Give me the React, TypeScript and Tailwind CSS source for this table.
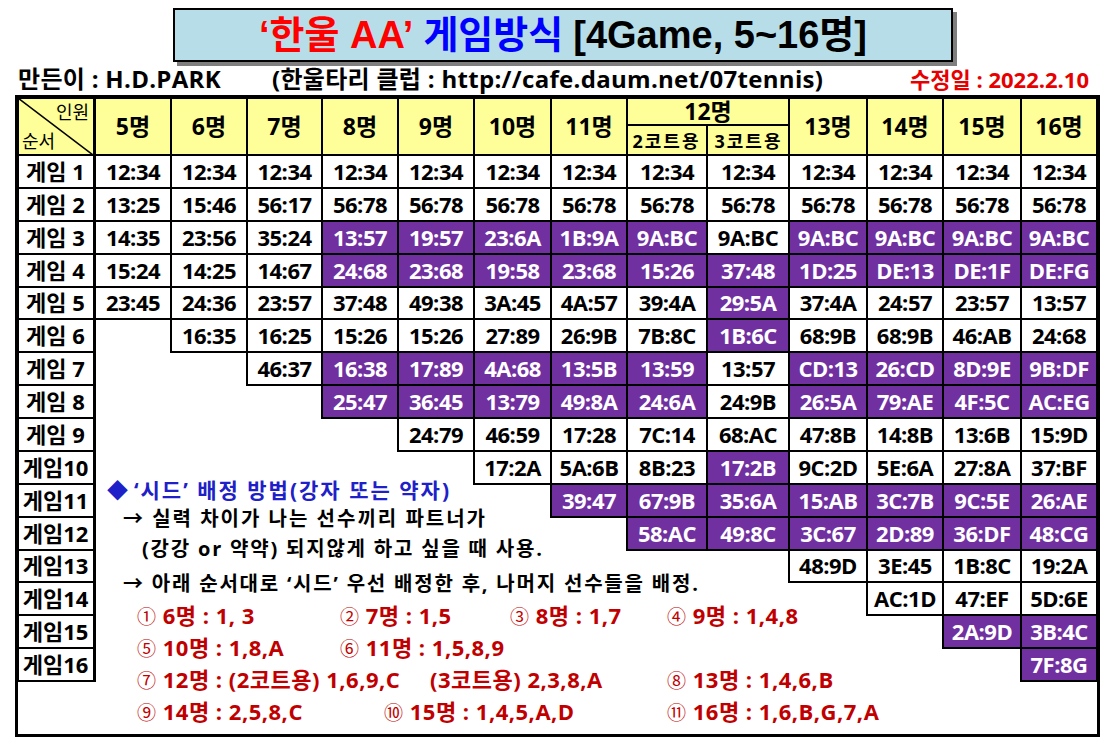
import React from "react"

const ROW = [
  "row-start-1", "row-start-2", "row-start-3", "row-start-4", "row-start-5", "row-start-6",
  "row-start-7", "row-start-8", "row-start-9", "row-start-10", "row-start-11", "row-start-12",
  "row-start-13", "row-start-14", "row-start-15", "row-start-16", "row-start-17", "row-start-18",
]
const COL = [
  "col-start-1", "col-start-2", "col-start-3", "col-start-4", "col-start-5", "col-start-6", "col-start-7",
  "col-start-8", "col-start-9", "col-start-10", "col-start-11", "col-start-12", "col-start-13", "col-start-14",
]

// "*" marks a purple cell, "" an empty one
const GAMES: string[][] = [
  ["12:34", "12:34", "12:34", "12:34", "12:34", "12:34", "12:34", "12:34", "12:34", "12:34", "12:34", "12:34", "12:34"],
  ["13:25", "15:46", "56:17", "56:78", "56:78", "56:78", "56:78", "56:78", "56:78", "56:78", "56:78", "56:78", "56:78"],
  ["14:35", "23:56", "35:24", "*13:57", "*19:57", "*23:6A", "*1B:9A", "*9A:BC", "9A:BC", "*9A:BC", "*9A:BC", "*9A:BC", "*9A:BC"],
  ["15:24", "14:25", "14:67", "*24:68", "*23:68", "*19:58", "*23:68", "*15:26", "*37:48", "*1D:25", "*DE:13", "*DE:1F", "*DE:FG"],
  ["23:45", "24:36", "23:57", "37:48", "49:38", "3A:45", "4A:57", "39:4A", "*29:5A", "37:4A", "24:57", "23:57", "13:57"],
  ["", "16:35", "16:25", "15:26", "15:26", "27:89", "26:9B", "7B:8C", "*1B:6C", "68:9B", "68:9B", "46:AB", "24:68"],
  ["", "", "46:37", "*16:38", "*17:89", "*4A:68", "*13:5B", "*13:59", "13:57", "*CD:13", "*26:CD", "*8D:9E", "*9B:DF"],
  ["", "", "", "*25:47", "*36:45", "*13:79", "*49:8A", "*24:6A", "24:9B", "*26:5A", "*79:AE", "*4F:5C", "*AC:EG"],
  ["", "", "", "", "24:79", "46:59", "17:28", "7C:14", "68:AC", "47:8B", "14:8B", "13:6B", "15:9D"],
  ["", "", "", "", "", "17:2A", "5A:6B", "8B:23", "*17:2B", "9C:2D", "5E:6A", "27:8A", "37:BF"],
  ["", "", "", "", "", "", "*39:47", "*67:9B", "*35:6A", "*15:AB", "*3C:7B", "*9C:5E", "*26:AE"],
  ["", "", "", "", "", "", "", "*58:AC", "*49:8C", "*3C:67", "*2D:89", "*36:DF", "*48:CG"],
  ["", "", "", "", "", "", "", "", "", "48:9D", "3E:45", "1B:8C", "19:2A"],
  ["", "", "", "", "", "", "", "", "", "", "AC:1D", "47:EF", "5D:6E"],
  ["", "", "", "", "", "", "", "", "", "", "", "*2A:9D", "*3B:4C"],
  ["", "", "", "", "", "", "", "", "", "", "", "", "*7F:8G"],
]

const HEAD = ["5명", "6명", "7명", "8명", "9명", "10명", "11명"]
const HEAD_R = ["13명", "14명", "15명", "16명"]

const line = "outline-2 -outline-offset-1 outline-black"

function Num({ n }: { n: string }) {
  return <span className="text-[19px] font-normal">{n}</span>
}

function Seeds() {
  return (
    <div className="col-start-2 col-end-15 row-start-11 row-end-19 flex flex-col pl-[12px] font-bold">
      <div className="mt-[26px] flex h-[28px] items-center text-[21px] tracking-[2px] text-[#2020c8]">
        <span className="mr-[4px]">◆</span>
        <span>‘시드’ 배정 방법(강자 또는 약자)</span>
      </div>
      <div className="flex h-[28px] items-center pl-[16px] text-[20px] tracking-[2px] text-black">
        → 실력 차이가 나는 선수끼리 파트너가
      </div>
      <div className="mt-[2px] flex h-[28px] items-center pl-[35px] text-[20px] tracking-[1.8px] text-black">
        (강강 or 약약) 되지않게 하고 싶을 때 사용.
      </div>
      <div className="mt-[7px] flex h-[28px] items-center pl-[16px] text-[20px] tracking-[1.8px] text-black">
        → 아래 순서대로 ‘시드’ 우선 배정한 후, 나머지 선수들을 배정.
      </div>
      <div className="mt-[2px] flex flex-col pl-[30px] text-[22px] tracking-[0.5px] text-[#c00000]">
        <div className="flex h-[32px] items-center">
          <span className="w-[203px]"><Num n="①" /> 6명 : 1, 3</span>
          <span className="w-[170px]"><Num n="②" /> 7명 : 1,5</span>
          <span className="w-[157px]"><Num n="③" /> 8명 : 1,7</span>
          <span><Num n="④" /> 9명 : 1,4,8</span>
        </div>
        <div className="flex h-[32px] items-center">
          <span className="w-[203px]"><Num n="⑤" /> 10명 : 1,8,A</span>
          <span><Num n="⑥" /> 11명 : 1,5,8,9</span>
        </div>
        <div className="flex h-[32px] items-center">
          <span className="w-[293px]"><Num n="⑦" /> 12명 : (2코트용) 1,6,9,C</span>
          <span className="w-[237px]">(3코트용) 2,3,8,A</span>
          <span><Num n="⑧" /> 13명 : 1,4,6,B</span>
        </div>
        <div className="flex h-[32px] items-center">
          <span className="w-[247px]"><Num n="⑨" /> 14명 : 2,5,8,C</span>
          <span className="w-[283px]"><Num n="⑩" /> 15명 : 1,4,5,A,D</span>
          <span><Num n="⑪" /> 16명 : 1,6,B,G,7,A</span>
        </div>
      </div>
    </div>
  )
}

export default function App() {
  return (
    <div className="h-[739px] w-[1111px] overflow-hidden bg-white font-['Open_Sans','Noto_Sans_CJK_KR',sans-serif] text-black">
      {/* title */}
      <div className="pl-[173px] pt-[8px]">
        <div className="flex h-[54px] w-[780px] items-center justify-center border-2 border-black bg-[#b7dee8] font-['Liberation_Sans','Noto_Sans_CJK_KR',sans-serif] text-[38px] font-bold leading-none shadow-[4px_4px_0_#7f7f7f]">
          <span className="text-[#ff0000]">‘한울 AA’</span>
          <span className="ml-[10px] text-[#0000ff]">게임방식</span>
          <span className="ml-[10px]">[4Game, 5~16명]</span>
        </div>
      </div>

      {/* author line */}
      <div className="flex h-[33px] items-center text-[24px] font-bold leading-none tracking-[0.3px]">
        <span className="ml-[18px] w-[254px]">만든이 : H.D.PARK</span>
        <span>(한울타리 클럽 : http://cafe.daum.net/07tennis)</span>
        <span className="ml-auto mr-[22px] text-[22px] tracking-normal text-[#e60000]">수정일 : 2022.2.10</span>
      </div>

      {/* table */}
      <div className="ml-[15px] h-[642px] w-[1085px] border-[3px] border-black">
        <div className="grid h-full grid-cols-[77px_76px_76px_75px_76px_76px_77px_76px_80px_82px_78px_76px_78px_76px] grid-rows-[57px_repeat(16,32.875px)_1fr]">
          <Seeds />

          {/* corner */}
          <div className={`relative col-start-1 row-start-1 flex flex-col justify-between border-r-2 border-black bg-[#ffff99] px-[4px] py-[2px] text-[18px] leading-[24px] ${line}`}>
            <svg className="absolute inset-0 h-full w-full" viewBox="0 0 77 57" preserveAspectRatio="none">
              <line x1="0" y1="0" x2="77" y2="57" stroke="#000" strokeWidth="1.5" />
            </svg>
            <span className="self-end">인원</span>
            <span className="self-start">순서</span>
          </div>

          {HEAD.map((h, i) => (
            <div key={h} className={`row-start-1 ${COL[i + 1]} flex items-center justify-center bg-[#ffff99] text-[23px] font-bold ${line}`}>
              {h}
            </div>
          ))}

          <div className={`col-start-9 col-end-11 row-start-1 flex flex-col bg-[#ffff99] font-bold ${line}`}>
            <div className="flex h-[28px] items-center justify-center border-b-2 border-black text-[23px] leading-none">12명</div>
            <div className="grid flex-1 grid-cols-[80px_82px] text-[18px] leading-none tracking-[2px]">
              <div className="flex items-center justify-center border-r border-black">2코트용</div>
              <div className="flex items-center justify-center border-l border-black">3코트용</div>
            </div>
          </div>

          {HEAD_R.map((h, i) => (
            <div key={h} className={`row-start-1 ${COL[i + 10]} flex items-center justify-center bg-[#ffff99] text-[23px] font-bold ${line}`}>
              {h}
            </div>
          ))}

          {GAMES.map((row, r) => (
            <React.Fragment key={r}>
              <div className={`${ROW[r + 1]} col-start-1 flex items-center justify-center border-r-2 border-black bg-white text-[22px] font-bold ${line}`}>
                {r < 9 ? `게임 ${r + 1}` : `게임${r + 1}`}
              </div>
              {row.map((v, c) => {
                if (!v) return null
                const purple = v.startsWith("*")
                return (
                  <div
                    key={c}
                    className={`${ROW[r + 1]} ${COL[c + 1]} flex items-center justify-center text-[22px] font-bold tracking-[-0.5px] ${line} ${
                      purple ? "bg-[#7030a0] text-white" : "bg-white text-black"
                    }`}
                  >
                    {purple ? v.slice(1) : v}
                  </div>
                )
              })}
            </React.Fragment>
          ))}
        </div>
      </div>
    </div>
  )
}
